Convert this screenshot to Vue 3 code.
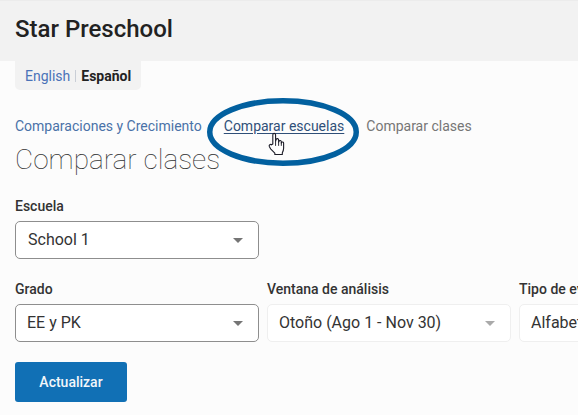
<script setup>
const rowSelects = [
  { label: 'Grado', value: 'EE y PK', active: true },
  { label: 'Ventana de análisis', value: 'Otoño (Ago 1 - Nov 30)', active: false },
  { label: 'Tipo de evaluación', value: 'Alfabetización', active: false },
]
</script>

<template>
  <div class="page">
    <header class="header"><h1 class="title">Star Preschool</h1></header>
    <main class="main">
      <div class="lang">
        <a class="lang-link">English</a>
        <span class="lang-sep"></span>
        <strong class="lang-cur">Español</strong>
      </div>

      <nav class="crumbs">
        <a class="crumb">Comparaciones y Crecimiento</a>
        <a class="crumb crumb-hover">Comparar escuelas</a>
        <span class="crumb-sep"></span>
        <span class="crumb-cur">Comparar clases</span>
      </nav>
      <h2 class="heading">Comparar clases</h2>

      <div class="field school">
        <div class="label">Escuela</div>
        <div class="select active">
          <span>School 1</span><i class="arrow"></i>
        </div>
      </div>

      <div class="row">
        <div v-for="s in rowSelects" :key="s.label" class="field">
          <div class="label">{{ s.label }}</div>
          <div class="select" :class="{ active: s.active }">
            <span>{{ s.value }}</span><i class="arrow"></i>
          </div>
        </div>
      </div>

      <button class="btn" type="button">Actualizar</button>
    </main>

    <svg class="annot" width="160" height="76" viewBox="0 0 160 76" aria-hidden="true">
      <ellipse cx="80" cy="38" rx="73.25" ry="31.25" fill="none" stroke="#02609f" stroke-width="5.5" />
    </svg>
    <svg class="hand" width="17" height="24" viewBox="0 0 18 26" aria-hidden="true">
      <path
        d="M5 13V3a1.5 1.5 0 0 1 3 0v7l.5-1.5a1.4 1.4 0 0 1 2.8.2V11l.4-1a1.3 1.3 0 0 1 2.5.3V12l.3-.6a1.2 1.2 0 0 1 2.2.6v5.5c0 2.2-.6 3.4-1.4 5v1.8H7.2v-1.5L2.6 18.2 1.2 15.6a1.5 1.5 0 0 1 2.4-1.7Z"
        fill="#fff" stroke="#1c1c28" stroke-width="1.2" stroke-linejoin="round"
      />
      <path d="M8 10v5M11.3 10.5V15M14.2 11.5V15" fill="none" stroke="#1c1c28" stroke-width="1" />
    </svg>
  </div>
</template>

<style>
html, body { margin: 0; background: #fcfcfc; overflow: hidden; }
</style>

<style scoped>
.page {
  position: relative;
  width: 578px;
  height: 415px;
  overflow: hidden;
  background: #fcfcfc;
  color: #212529;
  font-family: Roboto, "Liberation Sans", sans-serif;
}
.header {
  height: 61px;
  box-sizing: border-box;
  padding: 15px 15px 0;
  background: #f2f2f2;
  border-top: 1px solid #ececec;
}
.title {
  margin: 0;
  font-size: 24px;
  line-height: 26px;
  font-weight: 500;
  color: #222;
}
.main { padding: 0 15px; }
.lang {
  display: inline-flex;
  align-items: center;
  height: 29px;
  box-sizing: border-box;
  padding: 0 10px;
  background: #f2f2f2;
  border-radius: 0 0 5px 5px;
  font-size: 14px;
  vertical-align: top;
}
.lang-link { color: #4a72b8; }
.lang-sep { width: 1px; height: 12px; margin: 0 5px; background: #c9ced6; }
.lang-cur { font-weight: 700; color: #222; }
.crumbs {
  display: flex;
  align-items: center;
  height: 20px;
  margin-top: 26px;
  font-size: 14px;
  white-space: nowrap;
}
.crumb { color: #4a72a8; }
.crumb-hover {
  margin-left: 22px;
  color: #2f4f78;
  text-decoration: underline;
  text-underline-offset: 2px;
}
.crumb-sep { width: 22px; }
.crumb-cur { color: #767676; }
.heading {
  margin: 6px 0 0;
  font-size: 28px;
  line-height: 36px;
  font-weight: 100;
  color: #333;
}
.field { width: 244px; flex: none; }
.school { margin-top: 18px; }
.label {
  height: 20px;
  margin-bottom: 5px;
  font-size: 14px;
  line-height: 20px;
  font-weight: 500;
  color: #333;
  white-space: nowrap;
}
.select {
  display: flex;
  align-items: center;
  justify-content: space-between;
  height: 38px;
  box-sizing: border-box;
  padding: 0 15px 0 12px;
  background: #fff;
  border: 1px solid #efefef;
  border-radius: 5px;
  font-size: 16px;
  color: #333;
  white-space: nowrap;
}
.select span { margin-top: -1px; }
.row .select { padding-left: 11px; }
.select.active { border-color: #8e8e8e; }
.arrow {
  flex: none;
  width: 0;
  height: 0;
  border-left: 5px solid transparent;
  border-right: 5px solid transparent;
  border-top: 5px solid #aaa;
}
.select.active .arrow { border-top-color: #757575; }
.row { display: flex; gap: 8px; margin-top: 20px; }
.btn {
  display: block;
  width: 112px;
  height: 40px;
  margin-top: 20px;
  padding: 0;
  border: 0;
  border-radius: 3px;
  background: #1170b5;
  color: #f2f6fa;
  font: 500 14px Roboto, "Liberation Sans", sans-serif;
}
.annot { position: absolute; left: 203px; top: 94px; }
.hand { position: absolute; left: 268px; top: 132px; }
</style>
